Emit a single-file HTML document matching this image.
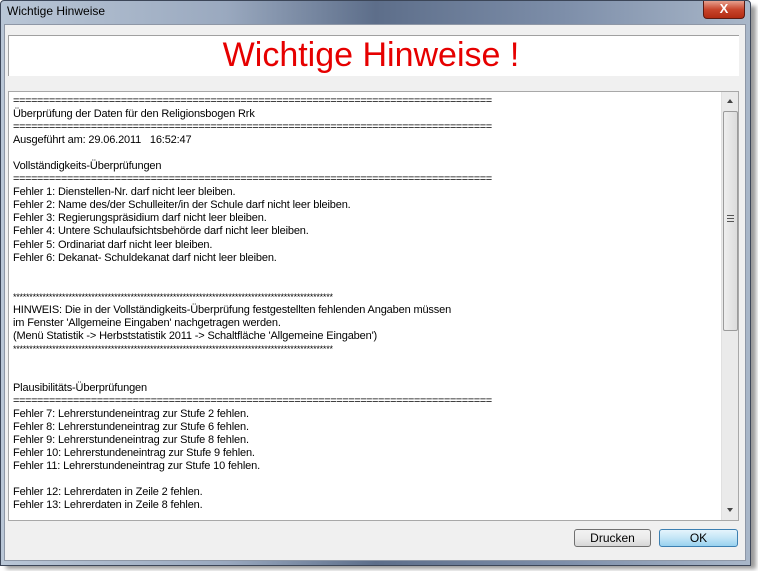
<!DOCTYPE html>
<html><head><meta charset="utf-8"><style>
*{margin:0;padding:0;box-sizing:border-box}
body{width:758px;height:571px;background:#fff;position:relative;overflow:hidden;font-family:"Liberation Sans",Arial,sans-serif}
.shadow{position:absolute;left:6px;top:6px;width:750px;height:563px;background:#9a9a9a;filter:blur(2px)}
.win{position:absolute;left:0;top:0;width:751px;height:566px;border:1px solid #3c4658;background:linear-gradient(90deg,#b9c6d6 0%,#9aa9bf 30%,#5d6e8a 50%,#7d8ea9 75%,#a9b7c9 100%);border-radius:4px 4px 0 0}
.title{position:absolute;left:6px;top:3px;font-size:12px;color:#000}
.close{position:absolute;left:702px;top:0;width:42px;height:18px;border:1px solid #5a1a12;border-top:none;border-radius:0 0 4px 4px;background:linear-gradient(#e7a08e,#c8452c 50%,#b22b12);color:#fff;font-weight:bold;font-size:13px;text-align:center;line-height:16px}
.client{position:absolute;left:4px;top:24px;width:742px;height:537px;background:#f0f0f0;border:1px solid #8e97a6}
.head{position:absolute;left:8px;top:35px;width:731px;height:41px;background:#fff;border-top:1px solid #a0a0a0;border-left:1px solid #a0a0a0}
.head div{text-align:center;color:#e60000;font-size:34px;line-height:38px;margin-left:-6px}
.box{position:absolute;left:8px;top:91px;width:731px;height:430px;background:#fff;border:1px solid #a8a8a8;overflow:hidden}
.txt{position:absolute;left:4px;top:3px;font-size:11px;line-height:13.05px;color:#000;white-space:pre;letter-spacing:-0.15px}
.eq{letter-spacing:-0.44px}
.st{font-size:9px;letter-spacing:-0.24px}
.sb{position:absolute;right:0;top:0;width:17px;height:428px;background:#eaeaea;border-left:1px solid #e0e0e0}
.thumb{position:absolute;left:1px;top:19px;width:15px;height:220px;border:1px solid #9b9b9b;border-radius:2px;background:linear-gradient(90deg,#eee,#dcdcdc)}
.btn{position:absolute;top:529px;height:18px;border:1px solid #707070;border-radius:3px;background:linear-gradient(#f2f2f2,#ebebeb 50%,#d6d6d6);font-size:12px;text-align:center;line-height:16px}
</style></head><body>
<div class="shadow"></div>
<div class="win">
<div class="title">Wichtige Hinweise</div>
<div class="close">X</div>
</div>
<div class="client"></div>
<div class="head"><div>Wichtige Hinweise !</div></div>
<div class="box">
<div class="txt"><span class="eq">================================================================================</span>
Überprüfung der Daten für den Religionsbogen Rrk
<span class="eq">================================================================================</span>
Ausgeführt am: 29.06.2011   16:52:47

Vollständigkeits-Überprüfungen
<span class="eq">================================================================================</span>
Fehler 1: Dienstellen-Nr. darf nicht leer bleiben.
Fehler 2: Name des/der Schulleiter/in der Schule darf nicht leer bleiben.
Fehler 3: Regierungspräsidium darf nicht leer bleiben.
Fehler 4: Untere Schulaufsichtsbehörde darf nicht leer bleiben.
Fehler 5: Ordinariat darf nicht leer bleiben.
Fehler 6: Dekanat- Schuldekanat darf nicht leer bleiben.


<span class="st">**************************************************************************************************</span>
HINWEIS: Die in der Vollständigkeits-Überprüfung festgestellten fehlenden Angaben müssen
im Fenster 'Allgemeine Eingaben' nachgetragen werden.
(Menü Statistik -&gt; Herbststatistik 2011 -&gt; Schaltfläche 'Allgemeine Eingaben')
<span class="st">**************************************************************************************************</span>


Plausibilitäts-Überprüfungen
<span class="eq">================================================================================</span>
Fehler 7: Lehrerstundeneintrag zur Stufe 2 fehlen.
Fehler 8: Lehrerstundeneintrag zur Stufe 6 fehlen.
Fehler 9: Lehrerstundeneintrag zur Stufe 8 fehlen.
Fehler 10: Lehrerstundeneintrag zur Stufe 9 fehlen.
Fehler 11: Lehrerstundeneintrag zur Stufe 10 fehlen.

Fehler 12: Lehrerdaten in Zeile 2 fehlen.
Fehler 13: Lehrerdaten in Zeile 8 fehlen.</div>
<div class="sb">
<div style="position:absolute;left:5px;top:7px;border-left:3px solid transparent;border-right:3px solid transparent;border-bottom:4px solid #444"></div>
<div class="thumb"><div style="position:absolute;left:3px;top:103px;width:7px;height:7px;border-top:1px solid #555;border-bottom:1px solid #555"></div><div style="position:absolute;left:3px;top:106px;width:7px;height:1px;background:#555"></div></div>
<div style="position:absolute;left:5px;top:416px;border-left:3px solid transparent;border-right:3px solid transparent;border-top:4px solid #444"></div>
</div>
</div>
<div class="btn" style="left:574px;width:77px">Drucken</div>
<div class="btn" style="left:659px;width:79px;border-color:#3c7fb1;background:linear-gradient(#e5f4fc,#c4e5f6 50%,#98d1ef)">OK</div>
</body></html>
